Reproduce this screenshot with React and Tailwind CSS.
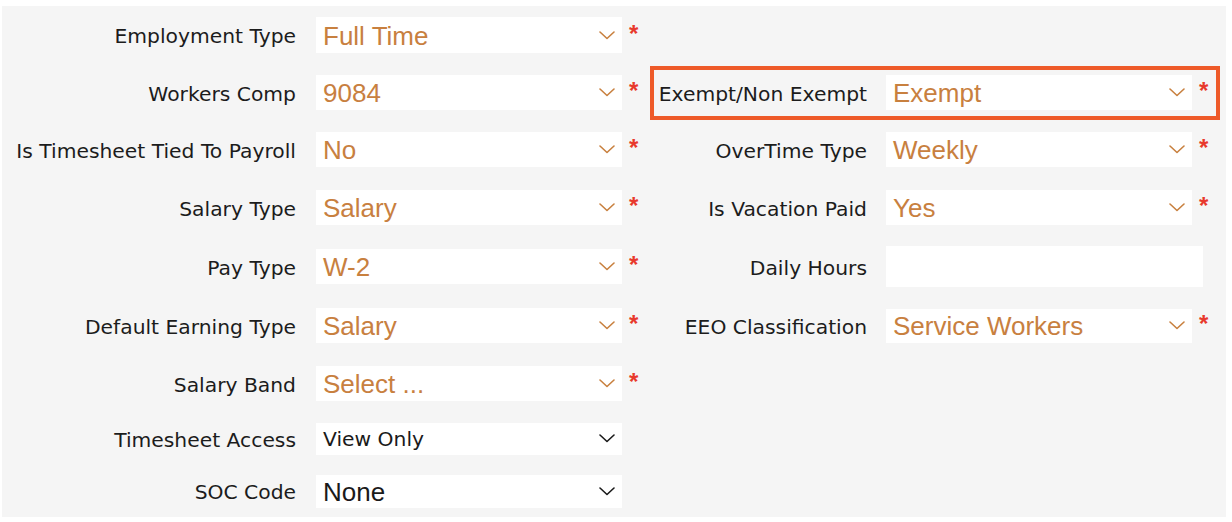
import React from "react";

const LABEL_FONT = { fontFamily: '"DejaVu Sans", sans-serif' };
const VALUE_FONT = { fontFamily: '"Liberation Sans", Arial, sans-serif' };

function Chevron({ dark }) {
  return (
    <svg width="16" height="9" viewBox="0 0 16 9" className="shrink-0">
      <path
        d="M1 1 L8 7.5 L15 1"
        fill="none"
        stroke={dark ? "#1a1a1a" : "#c8803f"}
        strokeWidth="1.6"
        strokeLinecap="round"
        strokeLinejoin="round"
      />
    </svg>
  );
}

function Star() {
  return (
    <span
      className="text-[#e8392c] font-bold text-[24px] leading-none w-[12px] -mt-[3px]"
      style={VALUE_FONT}
    >
      *
    </span>
  );
}

function Select({ value, h = "h-[35px]", plain, small, star = true }) {
  return (
    <div className="flex items-center">
      <div className={`w-[306px] ${h} bg-white flex items-center justify-between pl-[7px] pr-[7px]`}>
        <span
          className={
            plain
              ? small
                ? "text-[20.3px] text-[#1a1a1a] pt-[2px]"
                : "text-[26px] text-[#1a1a1a] pt-[2px]"
              : "text-[26px] text-[#c8803f] pt-[2px]"
          }
          style={small ? LABEL_FONT : VALUE_FONT}
        >
          {value}
        </span>
        <Chevron dark={plain} />
      </div>
      {star && <div className="ml-[7px] flex items-center"><Star /></div>}
    </div>
  );
}

function LeftField({ label, children }) {
  return (
    <div className="w-[648px] flex items-center">
      <div className="w-[294px] text-right text-[20.3px] text-[#1c1c1c] pt-[3px]" style={LABEL_FONT}>
        {label}
      </div>
      <div className="ml-[20px]">{children}</div>
    </div>
  );
}

function RightField({ label, children, highlight }) {
  return (
    <div
      className={`w-[570px] h-[54px] flex items-center border-[4px] ${
        highlight ? "border-[#ee5a29]" : "border-transparent"
      }`}
    >
      <div className="w-[213px] text-right text-[20.3px] text-[#1c1c1c] pt-[3px]" style={LABEL_FONT}>
        {label}
      </div>
      <div className="ml-[19px]">{children}</div>
    </div>
  );
}

const rows = [
  {
    h: "h-[58px]",
    left: ["Employment Type", <Select value="Full Time" h="h-[36px]" />],
  },
  {
    h: "h-[57px]",
    left: ["Workers Comp", <Select value="9084" />],
    right: ["Exempt/Non Exempt", <Select value="Exempt" />, true],
  },
  {
    h: "h-[57px]",
    left: ["Is Timesheet Tied To Payroll", <Select value="No" />],
    right: ["OverTime Type", <Select value="Weekly" />],
  },
  {
    h: "h-[59px]",
    left: ["Salary Type", <Select value="Salary" />],
    right: ["Is Vacation Paid", <Select value="Yes" />],
  },
  {
    h: "h-[59px]",
    left: ["Pay Type", <Select value="W-2" />],
    right: ["Daily Hours", <div className="w-[317px] h-[41px] bg-white" />],
  },
  {
    h: "h-[59px]",
    left: ["Default Earning Type", <Select value="Salary" />],
    right: ["EEO Classification", <Select value="Service Workers" h="h-[34px]" />],
  },
  {
    h: "h-[57px]",
    left: ["Salary Band", <Select value="Select ..." />],
  },
  {
    h: "h-[53px]",
    left: ["Timesheet Access", <Select value="View Only" h="h-[32px]" plain small star={false} />],
  },
  {
    h: "h-[52px]",
    left: ["SOC Code", <Select value="None" h="h-[33px]" plain star={false} />],
  },
];

export default function App() {
  return (
    <div className="w-[1232px] h-[522px] bg-white pt-[6px] pl-[2px]">
      <div className="w-[1224px] h-[511px] bg-[#f5f5f5] flex flex-col">
        {rows.map((r, i) => (
          <div key={i} className={`${r.h} flex items-center`}>
            <LeftField label={r.left[0]}>{r.left[1]}</LeftField>
            {r.right && (
              <RightField label={r.right[0]} highlight={r.right[2]}>
                {r.right[1]}
              </RightField>
            )}
          </div>
        ))}
      </div>
    </div>
  );
}
